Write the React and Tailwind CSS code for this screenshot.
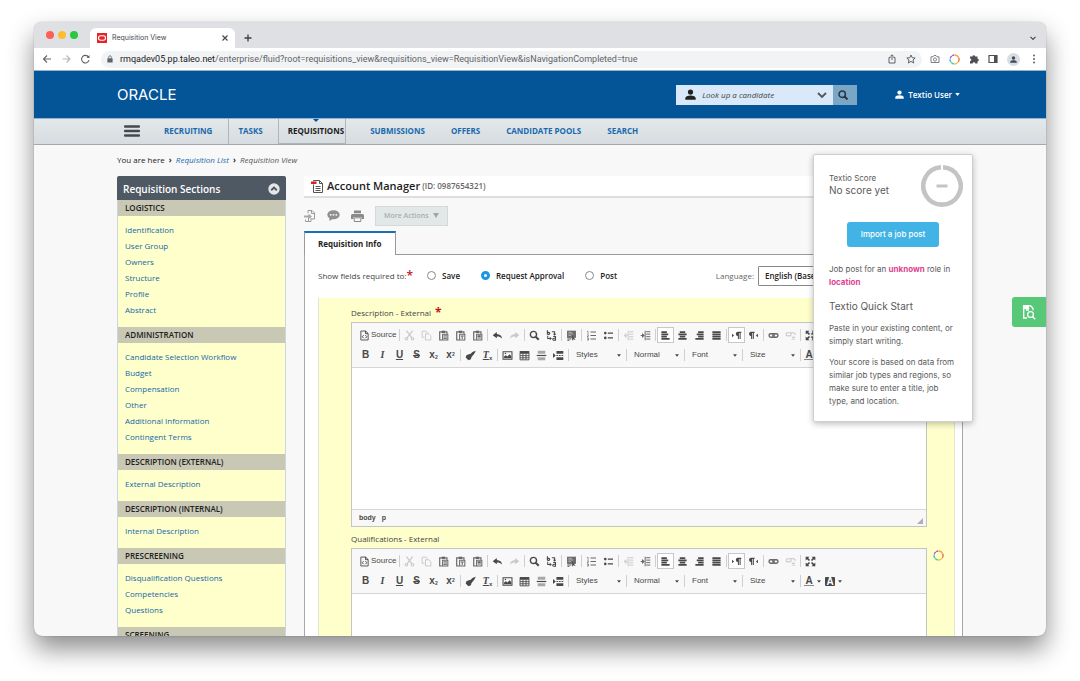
import React, { useState } from "react";

const sections = [
  {
    title: "LOGISTICS",
    links: ["Identification", "User Group", "Owners", "Structure", "Profile", "Abstract"],
  },
  {
    title: "ADMINISTRATION",
    links: [
      "Candidate Selection Workflow",
      "Budget",
      "Compensation",
      "Other",
      "Additional Information",
      "Contingent Terms",
    ],
  },
  { title: "DESCRIPTION (EXTERNAL)", links: ["External Description"] },
  { title: "DESCRIPTION (INTERNAL)", links: ["Internal Description"] },
  {
    title: "PRESCREENING",
    links: ["Disqualification Questions", "Competencies", "Questions"],
  },
  { title: "SCREENING", links: [] },
];

const clipboard = (
  <>
    <path d="M6 2.8H2.500v11.700h3.500M10.500 2.800H13v2.500" fill="none" stroke="currentColor" strokeWidth="1.700" />
    <path d="M5.500 1h5v3.400h-5z" />
    <path d="M6.700 6.200h7.600v8.300H6.700z" fill="none" stroke="currentColor" strokeWidth="1.500" />
  </>
);

const glyphs = {
  source: (
    <>
      <path d="M2.7 1.5h7l3.600 3.600v9.400H2.700z" fill="none" stroke="currentColor" strokeWidth="1.300" />
      <path d="M9.500 1.500v3.800h3.800M6.700 7.500L4.700 9.700l2 2.200M9.300 7.500l2 2.200-2 2.200" fill="none" stroke="currentColor" strokeWidth="1.400" />
    </>
  ),
  cut: (
    <>
      <path d="M3.500 1l8 10.500M12.500 1l-8 10.500" fill="none" stroke="currentColor" strokeWidth="1.800" />
      <circle cx="3.500" cy="12.800" r="1.800" fill="none" stroke="currentColor" strokeWidth="1.600" />
      <circle cx="12.500" cy="12.800" r="1.800" fill="none" stroke="currentColor" strokeWidth="1.600" />
    </>
  ),
  copy: (
    <>
      <path d="M5 10.500H1.700V1.700h5.600l1.900 1.900V5" fill="none" stroke="currentColor" strokeWidth="1.400" />
      <path d="M6.500 5.500h5l2.800 2.800v6.200H6.500z" fill="none" stroke="currentColor" strokeWidth="1.400" />
    </>
  ),
  paste: (
    <>
      {clipboard}
      <path d="M8 8.300h5M8 10.300h5M8 12.300h5" fill="none" stroke="currentColor" strokeWidth="1.300" />
    </>
  ),
  pasteText: (
    <>
      {clipboard}
      <path d="M8.300 8.700h4.500M10.500 8.500V13" fill="none" stroke="currentColor" strokeWidth="1.500" />
    </>
  ),
  pasteWord: (
    <>
      {clipboard}
      <path d="M8.500 8h4v2.500h-4zM8 12.500h5" stroke="currentColor" strokeWidth="0.800" />
    </>
  ),
  undo: <path d="M7 3L1 7.500 7 12V9.300c3.500 0 6 .7 7.700 3.200C14.300 8.500 11.500 6 7 5.800z" />,
  redo: <path d="M9 3l6 4.500L9 12V9.300c-3.500 0-6 .7-7.700 3.200C1.700 8.500 4.500 6 9 5.800z" />,
  find: (
    <>
      <circle cx="6.500" cy="6.500" r="4.500" fill="none" stroke="currentColor" strokeWidth="2.100" />
      <path d="M9.700 9.700l4.500 4.500" stroke="currentColor" strokeWidth="3" />
    </>
  ),
  replace: (
    <>
      <path d="M2 .5v5.800M2 3.500h2a1.400 1.400 0 010 2.800H2" fill="none" stroke="currentColor" strokeWidth="1.600" />
      <path d="M10.500 9.500h3.300v5.300h-2.600a1.300 1.300 0 010-2.700h2.600" fill="none" stroke="currentColor" strokeWidth="1.600" />
      <path d="M2.500 8.500v3.800h3.500M8.500 2.500h4v4" fill="none" stroke="currentColor" strokeWidth="1.500" />
      <path d="M5.500 9.800L8.500 12.300l-3 2.500zM10 5.500h5L12.500 8.300z" />
    </>
  ),
  selectAll: (
    <>
      <path d="M1.500 1h13v10.500h-13z" opacity="0.8" />
      <path d="M2 13h6M2 15h3" stroke="currentColor" strokeWidth="1.300" />
      <path d="M9 7.500v8l2-2 3 1.500z" />
      <path d="M3.500 3.500h5M3.500 5.700h7M3.500 7.900h4" stroke="#f8f8f8" strokeWidth="0.700" />
    </>
  ),
  ol: (
    <>
      <path d="M6.500 3h8M6.500 8h8M6.500 13h8" stroke="currentColor" strokeWidth="1.500" />
      <path d="M1.500 2H3v3.500M1.500 7h2v1.200l-2 1.500h2.200M1.500 11.500h2v3.200h-2M2 13h1.500" fill="none" stroke="currentColor" />
    </>
  ),
  ul: (
    <>
      <path d="M7 4.500h7.500M7 11.500h7.500" stroke="currentColor" strokeWidth="2" />
      <circle cx="3.300" cy="4.500" r="1.900" />
      <circle cx="3.300" cy="11.500" r="1.900" />
    </>
  ),
  outdent: (
    <>
      <path d="M9 2.500h6M9 6h6M9 9.700h6M9 13.200h6M7.500 1v14" stroke="currentColor" strokeWidth="1.400" />
      <path d="M5 4.500L1 8l4 3.500zM4 7.300h3v1.500H4z" />
    </>
  ),
  indent: (
    <>
      <path d="M9 2.500h6M9 6h6M9 9.700h6M9 13.200h6M7.500 1v14" stroke="currentColor" strokeWidth="1.400" />
      <path d="M3 4.500L7 8l-4 3.500zM1 7.300h3v1.500H1z" />
    </>
  ),
  left: <path d="M2 3h8M2 6.300h10M2 9.600h8M2 12.900h12" stroke="currentColor" strokeWidth="2.400" />,
  center: <path d="M4 3h8M2 6.300h12M4 9.600h8M2 12.900h12" stroke="currentColor" strokeWidth="2.400" />,
  right: <path d="M6 3h8M4 6.300h10M6 9.600h8M2 12.900h12" stroke="currentColor" strokeWidth="2.400" />,
  justify: <path d="M2 3h12M2 6.300h12M2 9.600h12M2 12.900h12" stroke="currentColor" strokeWidth="2.400" />,
  ltr: <path d="M1.500 5.500l3 2.500-3 2.500zM9.500 2.500H15v1.700h-1v9h-1.500v-9h-1v9H10V9a3.300 3.300 0 01-.5-6.500z" />,
  rtl: <path d="M14.500 5.500l-3 2.500 3 2.500zM4 2.500h5.500v1.700h-1v9H7v-9H6v9H4.500V9A3.300 3.300 0 014 2.500z" />,
  link: (
    <>
      <rect x="1.500" y="5.500" width="7.500" height="5" rx="2.500" fill="none" stroke="currentColor" strokeWidth="2" />
      <rect x="7" y="5.500" width="7.500" height="5" rx="2.500" fill="none" stroke="currentColor" strokeWidth="2" />
    </>
  ),
  unlink: (
    <>
      <rect x="1.500" y="4" width="7.500" height="4.500" rx="2.200" fill="none" stroke="currentColor" strokeWidth="1.600" />
      <path d="M8 4h4.500a2.200 2.200 0 012 3M10 9.500l4.500 4.500M14.500 9.500L10 14" fill="none" stroke="currentColor" strokeWidth="1.600" />
    </>
  ),
  maximize: (
    <>
      <path d="M2 2l4.500 4.500M14 2L9.500 6.500M2 14l4.500-4.500M14 14L9.500 9.500" stroke="currentColor" strokeWidth="2.400" />
      <path d="M1 1h5.500L1 6.500zM15 1v5.500L9.500 1zM1 15V9.500L6.500 15zM15 15H9.500L15 9.500z" />
    </>
  ),
  brush: (
    <path d="M15.500 1c-2.500.5-5.300 2-7 4.300L5.500 6 2 7.800 1 11l4 4 3.500-1.500 1-3.300 1.800-2.200C13 6 15 3.500 15.500 1z" />
  ),
  image: (
    <>
      <path d="M1.500 2.500h13v11h-13z" fill="none" stroke="currentColor" strokeWidth="1.500" />
      <path d="M3 12V9.500l2.500-2 2.500 2L11 6l2.500 3v3z" />
      <circle cx="5" cy="5.200" r="1.100" />
    </>
  ),
  table: (
    <>
      <path d="M1 1.500h14v4H1z" />
      <path d="M1.500 5v9.300h13V5M1.500 8.200h13M1.500 11.300h13M5.700 5v9M10.200 5v9" fill="none" stroke="currentColor" strokeWidth="1.300" />
    </>
  ),
  hr: (
    <>
      <path d="M2.500 1h11v4.500h-11zM2.500 10.500h11V15h-11z" opacity="0.450" />
      <path d="M1 8h14" stroke="currentColor" strokeWidth="1.700" />
    </>
  ),
  pageBreak: (
    <>
      <path d="M0 4.500L4 8l-4 3.500zM5 1.500h10v3.800H5zM5 10.700h10v3.800H5z" />
      <path d="M5 8h10" stroke="currentColor" strokeWidth="1.400" strokeDasharray="2.500 1.200" />
    </>
  ),
};

const topRow = [
  ["cut", "Cut", "off"],
  ["copy", "Copy", "off"],
  ["paste", "Paste", "soft"],
  ["pasteText", "Paste as plain text", "soft"],
  ["pasteWord", "Paste from Word", "soft"],
  null,
  ["undo", "Undo"],
  ["redo", "Redo", "off"],
  null,
  ["find", "Find"],
  ["replace", "Replace"],
  null,
  ["selectAll", "Select All"],
  null,
  ["ol", "Numbered list", "soft"],
  ["ul", "Bulleted list"],
  null,
  ["outdent", "Decrease indent", "off"],
  ["indent", "Increase indent", "soft"],
  null,
  ["left", "Align left", "on"],
  ["center", "Center"],
  ["right", "Align right"],
  ["justify", "Justify"],
  null,
  ["ltr", "Text direction left to right", "on"],
  ["rtl", "Text direction right to left"],
  null,
  ["link", "Link", "soft"],
  ["unlink", "Unlink", "off"],
  null,
  ["maximize", "Maximize"],
];

const tones = {
  off: "border-transparent text-[#c9c9c9]",
  soft: "border-transparent text-[#666]",
  on: "border-[#c8c8c8] bg-white text-[#484848]",
  normal: "border-transparent text-[#484848]",
};

const Glyph = ({ name }) => (
  <svg viewBox="0 0 16 16" className="size-[11px] shrink-0" fill="currentColor" aria-hidden="true">
    {glyphs[name]}
  </svg>
);

const ToolButton = ({ label, tone = "normal", children }) => (
  <button
    type="button"
    aria-label={label}
    disabled={tone === "off"}
    className={`flex h-4 w-[17px] shrink-0 items-center justify-center border ${tones[tone]}`}
  >
    {children}
  </button>
);

const Divider = () => (
  <span className="flex w-[3px] shrink-0 justify-center">
    <span className="h-3 w-px bg-[#cfcfcf]" />
  </span>
);

const Caret = () => (
  <svg viewBox="0 0 6 4" className="h-[3px] w-1 shrink-0" fill="#484848" aria-hidden="true">
    <path d="M0 0h6L3 4z" />
  </svg>
);

const Combo = ({ label }) => (
  <span className="flex w-[55px] shrink-0 items-center pr-1 pl-1.5">
    <select
      aria-label={label}
      className="min-w-0 flex-1 appearance-none bg-transparent text-[8px] leading-3 text-[#484848]"
    >
      <option>{label}</option>
    </select>
    <Caret />
  </span>
);

const Editor = ({ id, label, required }) => (
  <div className="flex flex-col">
    <label htmlFor={id} className="flex h-3 items-center text-[8px] leading-3 text-[#444]">
      {label}
      {required && <span className="ml-1 text-xs leading-3 font-bold text-[#c4161c]">*</span>}
    </label>
    <div className="mt-[3px] border border-[#c4c4c4] bg-white">
      <div className="overflow-hidden border-b border-[#d6d6d6] bg-[#f8f8f8] py-0.5 pl-[5px] font-['Liberation_Sans',Arial,sans-serif]">
        <div className="flex h-5 items-center">
          <button
            type="button"
            className="flex w-[41px] shrink-0 items-center gap-px pl-0.5 text-[8px] leading-3 text-[#484848]"
          >
            <Glyph name="source" />
            Source
          </button>
          <Divider />
          {topRow.map((item, i) =>
            item ? (
              <ToolButton key={i} label={item[1]} tone={item[2]}>
                <Glyph name={item[0]} />
              </ToolButton>
            ) : (
              <Divider key={i} />
            )
          )}
        </div>
        <div className="flex h-5 items-center text-[10px] leading-3 font-bold">
          <ToolButton label="Bold">B</ToolButton>
          <ToolButton label="Italic">
            <i className="font-['Liberation_Serif',serif]">I</i>
          </ToolButton>
          <ToolButton label="Underline">
            <u>U</u>
          </ToolButton>
          <ToolButton label="Strikethrough">
            <s>S</s>
          </ToolButton>
          <ToolButton label="Subscript">
            <span>
              x<sub className="text-[5px]">2</sub>
            </span>
          </ToolButton>
          <ToolButton label="Superscript">
            <span>
              x<sup className="text-[5px]">2</sup>
            </span>
          </ToolButton>
          <Divider />
          <ToolButton label="Copy formatting">
            <Glyph name="brush" />
          </ToolButton>
          <ToolButton label="Remove format">
            <span>
              <i className="font-['Liberation_Serif',serif] underline">T</i>
              <sub className="text-[6px]">x</sub>
            </span>
          </ToolButton>
          <Divider />
          {["image", "table", "hr", "pageBreak"].map((name) => (
            <ToolButton key={name} label={name}>
              <Glyph name={name} />
            </ToolButton>
          ))}
          <div className="flex items-center font-normal">
            {["Styles", "Normal", "Font", "Size"].map((name) => (
              <React.Fragment key={name}>
                <Divider />
                <Combo label={name} />
              </React.Fragment>
            ))}
          </div>
          <Divider />
          <button
            type="button"
            aria-label="Text color"
            className="flex w-[21px] shrink-0 items-center justify-center gap-[3px] text-[#484848]"
          >
            <span className="border-b border-[#8a8a8a] px-px leading-[9px]">A</span>
            <Caret />
          </button>
          <button
            type="button"
            aria-label="Background color"
            className="flex w-[21px] shrink-0 items-center justify-center gap-[3px]"
          >
            <span className="rounded-[1px] bg-[#484848] px-px leading-[9px] text-white">A</span>
            <Caret />
          </button>
        </div>
      </div>
      <textarea id={id} className="block h-[141px] w-full resize-none bg-white p-2 text-[10px]" />
      <div className="flex h-[17px] items-center gap-1.5 border-t border-[#d6d6d6] bg-[#f8f8f8] pr-[3px] pl-[7px] font-['Liberation_Sans',Arial,sans-serif] text-[7px] font-bold text-[#484848]">
        <span>body</span>
        <span>p</span>
        <svg viewBox="0 0 6 6" className="mt-1.5 ml-auto size-1.5" fill="#b0b0b0" aria-hidden="true">
          <path d="M6 0v6H0z" />
        </svg>
      </div>
    </div>
  </div>
);

const PersonIcon = ({ className }) => (
  <svg viewBox="0 0 16 16" className={className} fill="currentColor" aria-hidden="true">
    <circle cx="8" cy="4.500" r="3.800" />
    <path d="M.5 15.500v-2C.5 10.800 4 9.500 8 9.500s7.500 1.300 7.500 4v2z" />
  </svg>
);

const TextioRing = ({ className }) => (
  <svg viewBox="0 0 16 16" className={className} fill="none" strokeWidth="2" aria-hidden="true">
    <path d="M8.500 1.500a6.500 6.500 0 015.200 3.300" stroke="#f6a03a" />
    <path d="M14 5.300a6.500 6.500 0 01-.4 6" stroke="#f0704a" />
    <path d="M13.200 11.900a6.500 6.500 0 01-4.500 2.600" stroke="#f4c542" />
    <path d="M8 14.500a6.500 6.500 0 01-4.800-2.200" stroke="#5cc878" />
    <path d="M2.800 11.800A6.500 6.500 0 011.600 7" stroke="#44b4e8" />
    <path d="M1.800 6.300A6.500 6.500 0 014 3" stroke="#8e62c8" />
    <path d="M4.500 2.600a6.500 6.500 0 013.300-1.100" stroke="#e84a98" />
  </svg>
);

const BrowserBar = () => (
  <div className="shrink-0 font-[Inter,sans-serif]">
    <div className="flex h-[26px] items-end bg-[#dee0e4] pl-3">
      <div className="mr-3 flex h-[26px] items-center gap-1">
        <span className="size-2 rounded-full bg-[#fe5f57]" />
        <span className="size-2 rounded-full bg-[#febc2e]" />
        <span className="size-2 rounded-full bg-[#28c840]" />
      </div>
      <div className="flex h-5 w-[145px] items-center rounded-t-md bg-white pr-1.5 pl-[7px]">
        <svg viewBox="0 0 10 10" className="size-2.5" aria-hidden="true">
          <rect width="10" height="10" fill="#e8242b" />
          <rect x="1.500" y="2.800" width="7" height="4.400" rx="2.200" fill="none" stroke="#fff" strokeWidth="1.100" />
        </svg>
        <span className="ml-[5px] flex-1 text-[7px] leading-3 text-[#45494d]">Requisition View</span>
        <button type="button" aria-label="Close tab">
          <svg viewBox="0 0 8 8" className="size-2" stroke="#45494d" strokeWidth="1.200" aria-hidden="true">
            <path d="M1.500 1.500l5 5M6.500 1.500l-5 5" />
          </svg>
        </button>
      </div>
      <button type="button" aria-label="New tab" className="mb-1.5 ml-[9px]">
        <svg viewBox="0 0 8 8" className="size-2" stroke="#3c4043" strokeWidth="1.300" aria-hidden="true">
          <path d="M4 .5v7M.5 4h7" />
        </svg>
      </button>
      <svg viewBox="0 0 8 8" className="mr-[9px] mb-1.5 ml-auto size-2" fill="none" stroke="#45494d" strokeWidth="1.200" aria-hidden="true">
        <path d="M1.500 2.800L4 5.300l2.500-2.500" />
      </svg>
    </div>
    <div className="flex h-[23px] items-center border-b border-[#8fb3d0] bg-white pr-[7px] pl-2">
      <svg viewBox="0 0 50 10" className="mr-[9px] h-2.5 w-[50px]" fill="none" strokeWidth="1.100" aria-hidden="true">
        <path d="M9 5H1.500M5 1.500L1.500 5 5 8.500" stroke="#5f6368" />
        <path d="M20.500 5H28M24.500 1.500L28 5l-3.500 3.500" stroke="#b4b7ba" />
        <path d="M46.500 3A3.800 3.800 0 1047 6.200" stroke="#5f6368" />
        <path d="M47.500 1v3h-3z" fill="#5f6368" />
      </svg>
      <div className="flex h-[17px] min-w-0 flex-1 items-center rounded-full bg-[#f1f3f4] px-1.5">
        <svg viewBox="0 0 8 10" className="h-2 w-1.5" aria-hidden="true">
          <path d="M.5 4h7v5.500h-7z" fill="#5f6368" />
          <path d="M2.200 4V2.500a1.800 1.800 0 013.600 0V4" fill="none" stroke="#5f6368" />
        </svg>
        <span className="ml-[7px] flex-1 truncate font-[Roboto,sans-serif] text-[9px] leading-3 text-[#5f6368]">
          <span className="text-[#202124]">rmqadev05.pp.taleo.net</span>
          /enterprise/fluid?root=requisitions_view&amp;requisitions_view=RequisitionView&amp;isNavigationCompleted=true
        </span>
        <svg viewBox="0 0 10 10" className="size-2.5" fill="none" stroke="#5f6368" aria-hidden="true">
          <path d="M3.500 3.500H2v5.500h6V3.500H6.500M5 6V1M3.300 2.500L5 .8l1.700 1.700" />
        </svg>
        <svg viewBox="0 0 10 10" className="ml-[9px] size-2.5" fill="none" stroke="#5f6368" aria-hidden="true">
          <path d="M5 1l1.200 2.700 3 .3L7 6l.7 3L5 7.400 2.300 9 3 6 .8 4l3-.3z" />
        </svg>
      </div>
      <div className="ml-2 flex items-center gap-[9px]">
        <svg viewBox="0 0 10 10" className="size-2.5" fill="none" stroke="#7b7f83" aria-hidden="true">
          <path d="M1 2.800h2L4 1.500h2l1 1.300h2v5.700H1z" />
          <circle cx="5" cy="5.500" r="1.600" />
        </svg>
        <TextioRing className="size-[11px]" />
        <svg viewBox="0 0 10 10" className="size-2.5" fill="#4d5155" aria-hidden="true">
          <path d="M3.500 2.500a1.300 1.300 0 012.600 0h2.400v2.300a1.300 1.300 0 010 2.600v2.100H6.300a1.300 1.300 0 00-2.600 0H1V7a1.300 1.300 0 000-2.600V2.500z" />
        </svg>
        <svg viewBox="0 0 10 10" className="size-2.5" aria-hidden="true">
          <path d="M1 1.500h8v7H1z" fill="none" stroke="#4d5155" strokeWidth="1.200" />
          <path d="M6 1.500h3v7H6z" fill="#4d5155" />
        </svg>
        <span className="flex size-[13px] items-center justify-center rounded-full bg-[#d9dde2]">
          <PersonIcon className="size-[7px] text-[#3f4a56]" />
        </span>
        <svg viewBox="0 0 10 10" className="size-2.5" fill="#5f6368" aria-hidden="true">
          <circle cx="5" cy="1.500" r="1" />
          <circle cx="5" cy="5" r="1" />
          <circle cx="5" cy="8.500" r="1" />
        </svg>
      </div>
    </div>
  </div>
);

const Header = () => (
  <header className="flex h-[47px] shrink-0 items-center bg-[#045598] pr-[86px] pl-[83px] text-white">
    <span className="font-[Inter,sans-serif] text-[15px] leading-4">ORACLE</span>
    <form className="ml-auto flex h-5 w-[181px] text-[#222]" onSubmit={(e) => e.preventDefault()}>
      <label htmlFor="lookup" aria-label="Look up a candidate" className="flex items-center bg-[#d9e9fa] pl-[9px]">
        <PersonIcon className="size-[11px]" />
      </label>
      <input
        id="lookup"
        type="text"
        placeholder="Look up a candidate"
        className="min-w-0 flex-1 bg-[#d9e9fa] pl-1.5 text-[8px] leading-3 italic placeholder:text-[#444]"
      />
      <button type="button" aria-label="Search options" className="bg-[#d9e9fa] pr-1.5">
        <svg viewBox="0 0 10 10" className="size-2.5" fill="none" stroke="#555" strokeWidth="1.800" aria-hidden="true">
          <path d="M1 3l4 4 4-4" />
        </svg>
      </button>
      <button type="submit" aria-label="Search" className="flex w-6 items-center justify-center bg-[#7ba7c7] pr-1">
        <svg viewBox="0 0 10 10" className="size-2.5" fill="none" stroke="#2b3640" strokeWidth="1.500" aria-hidden="true">
          <circle cx="4.200" cy="4.200" r="3.200" />
          <path d="M6.500 6.500l3 3" strokeWidth="2" />
        </svg>
      </button>
    </form>
    <button type="button" className="ml-[38px] flex items-center text-[8px] leading-3 font-semibold">
      <PersonIcon className="mr-1 size-[9px]" />
      Textio User
      <svg viewBox="0 0 6 4" className="ml-[3px] h-[3px] w-[5px]" fill="#fff" aria-hidden="true">
        <path d="M0 0h6L3 4z" />
      </svg>
    </button>
  </header>
);

const Nav = () => (
  <nav className="flex h-[27px] shrink-0 items-stretch border-t border-b border-t-[#8fb3d0] border-b-[#a3a8ab] bg-linear-to-b from-[#e3e8ea] to-[#d6dcdf] pl-[90px] text-[8px] leading-6 font-bold text-[#1a69ae]">
    <button type="button" aria-label="Menu" className="mr-6 pb-px">
      <svg viewBox="0 0 16 12" className="h-3 w-4" stroke="#44494e" strokeWidth="2.400" strokeLinecap="round" aria-hidden="true">
        <path d="M1 1.500h14M1 6h14M1 10.500h14" />
      </svg>
    </button>
    <a href="#recruiting" className="border-r border-[#b0b5b8] pr-4">
      RECRUITING
    </a>
    <a href="#tasks" className="border-r border-[#b0b5b8] pr-[15px] pl-[9px]">
      TASKS
    </a>
    <a
      href="#requisitions"
      aria-current="page"
      className="relative mr-6 border-r border-b border-[#b0b5b8] pr-px pl-[9px] text-[#1c1c1c]"
    >
      REQUISITIONS
      <svg viewBox="0 0 8 4" className="absolute top-0 left-1/2 h-[3px] w-2" fill="#045598" aria-hidden="true">
        <path d="M0 0h8L4 4z" />
      </svg>
    </a>
    <div className="flex gap-[26px]">
      <a href="#submissions">SUBMISSIONS</a>
      <a href="#offers">OFFERS</a>
      <a href="#pools">CANDIDATE POOLS</a>
      <a href="#search">SEARCH</a>
    </div>
  </nav>
);

const Sidebar = () => (
  <aside className="w-[169px] shrink-0">
    <div className="flex h-6 items-center justify-between rounded-t-xs bg-[#4f5963] px-1.5 pt-0.5">
      <h2 className="text-[10px] leading-4 font-semibold text-white">Requisition Sections</h2>
      <button type="button" aria-label="Collapse">
        <svg viewBox="0 0 12 12" className="size-3" aria-hidden="true">
          <circle cx="6" cy="6" r="5.700" fill="#e4e7e9" />
          <path d="M3.200 7.300L6 4.600l2.800 2.700" fill="none" stroke="#4f5963" strokeWidth="1.900" />
        </svg>
      </button>
    </div>
    <div className="border-x border-[#cdd6dc] bg-[#ffffcc]">
      {sections.map((section) => (
        <section key={section.title}>
          <h3 className="bg-[#c8c8b4] px-[7px] text-[8px] leading-4 font-semibold text-[#222]">{section.title}</h3>
          <ul className="px-[7px] pt-1.5 pb-[9px]">
            {section.links.map((link) => (
              <li key={link} className="text-[8px] leading-4">
                <a href="#section" className="text-[#1468a8]">
                  {link}
                </a>
              </li>
            ))}
          </ul>
        </section>
      ))}
    </div>
  </aside>
);

const RequisitionForm = () => {
  const [requiredTo, setRequiredTo] = useState("Request Approval");

  return (
    <main className="min-w-0 flex-1">
      <div className="flex h-[22px] items-center border-b-2 border-[#dedede] bg-white pl-[7px]">
        <svg viewBox="0 0 12 13" className="h-[13px] w-3" fill="none" stroke="#555" aria-hidden="true">
          <path d="M2.500 4.500v8h9V3.500l-3-3h-6v1M8.500.5v3h3M4.500 6.500h5M4.500 8.500h5M4.500 10.500h5" />
          <path d="M0 1.500h5.500v2.600H0z" fill="#d8232a" stroke="none" />
        </svg>
        <h1 className="ml-1 text-[11px] leading-4 font-semibold text-[#1e1e1e]">Account Manager</h1>
        <span className="ml-0.5 text-[8px] leading-3 font-semibold text-[#666]">(ID: 0987654321)</span>
      </div>
      <div className="flex h-[33px] items-center gap-[11px] pt-0.5">
        <button type="button" aria-label="Duplicate">
          <svg viewBox="0 0 12 12" className="size-3" fill="none" stroke="#9a9a9a" aria-hidden="true">
            <path d="M4 3V.5h4l2.500 2.500v6H7.500M7.500.5v3h3M4.500 7v4.500h-3V9.500M4.500 11.500H7V8" />
            <path d="M0 5.500h4.500V3.500L8 6.500 4.500 9V7.500H0z" fill="#a8a8a8" stroke="none" />
          </svg>
        </button>
        <button type="button" aria-label="Comments">
          <svg viewBox="0 0 13 11" className="h-[11px] w-[13px]" fill="#8f8f8f" aria-hidden="true">
            <ellipse cx="6.500" cy="4.800" rx="6.200" ry="4.500" />
            <path d="M2.500 7v4l4-2.500z" />
            <g fill="#fff">
              <circle cx="3.700" cy="4.800" r="0.900" />
              <circle cx="6.500" cy="4.800" r="0.900" />
              <circle cx="9.300" cy="4.800" r="0.900" />
            </g>
          </svg>
        </button>
        <button type="button" aria-label="Print">
          <svg viewBox="0 0 13 12" className="h-3 w-[13px]" fill="#8a8a8a" aria-hidden="true">
            <path d="M3 .5h7v2.700H3zM1.500 4h10A1.500 1.500 0 0113 5.500V9h-2.500V7h-8v2H0V5.500A1.500 1.500 0 011.500 4z" />
            <path d="M3.200 7.800h6.600v3.700H3.200z" fill="none" stroke="#8a8a8a" />
          </svg>
        </button>
        <button
          type="button"
          disabled
          className="flex h-5 items-center gap-1 border border-[#d4d8d8] bg-[#e2e8e8] px-2 text-[7px] leading-3 font-semibold text-[#a9aeae]"
        >
          More Actions
          <svg viewBox="0 0 6 5" className="h-[5px] w-1.5" fill="#a0a5a5" aria-hidden="true">
            <path d="M0 0h6L3 5z" />
          </svg>
        </button>
      </div>
      <div className="flex">
        <button
          type="button"
          className="h-6 border-x border-t-2 border-x-[#9a9a9a] border-t-[#1a6fb5] bg-white pr-3.5 pl-[13px] text-[8px] leading-3 font-bold text-[#1e1e1e]"
        >
          Requisition Info
        </button>
        <div className="flex-1 border-b border-[#9a9a9a]" />
      </div>
      <div className="border-x border-[#a8a8a8] bg-white pr-[7px] pl-[13px]">
        <div className="flex h-[43px] items-center pb-0.5 text-[8px] leading-3 font-semibold text-[#222]">
          <span className="font-normal text-[#444]">Show fields required to:</span>
          <span className="mr-3.5 text-xs leading-3 text-[#c4161c]">*</span>
          <div className="flex items-center gap-[21px]">
            {["Save", "Request Approval", "Post"].map((option) => (
              <label key={option} className="flex items-center gap-1.5">
                <input
                  type="radio"
                  name="required-to"
                  value={option}
                  checked={requiredTo === option}
                  onChange={() => setRequiredTo(option)}
                  className="size-[9px] appearance-none rounded-full border border-[#8a8a8a] bg-white checked:border-[3px] checked:border-[#1d95e5]"
                />
                {option}
              </label>
            ))}
          </div>
          <label htmlFor="language" className="mr-1 ml-auto font-normal text-[#666]">
            Language:
          </label>
          <select
            id="language"
            className="mr-[92px] h-5 w-[105px] appearance-none rounded-[1px] border border-[#888] bg-white px-1.5 text-[8px] font-semibold"
          >
            <option>English (Base)</option>
          </select>
        </div>
        <div className="relative flex flex-col gap-1.5 border-x border-[#e4e4d4] bg-[#ffffcc] pt-[9px] pr-[27px] pl-8">
          <Editor id="description" label="Description - External" required />
          <Editor id="qualifications" label="Qualifications - External" />
          <TextioRing className="absolute top-[252px] right-2.5 size-[11px]" />
        </div>
      </div>
    </main>
  );
};

const TextioPanel = () => (
  <div className="absolute top-[9px] right-[73px] w-[160px] rounded-[2px] border border-[#cfcfcf] bg-white px-[15px] pt-2.5 pb-[13px] font-[Inter,sans-serif] text-[8px] leading-[13px] text-[#5a5a5a] shadow-[0_2px_6px_rgba(0,0,0,0.25)]">
    <div className="-mr-1.5 flex items-start justify-between">
      <div className="pt-[7px]">
        <p className="leading-3">Textio Score</p>
        <p className="text-[10px] leading-3">No score yet</p>
      </div>
      <svg viewBox="0 0 42 42" className="size-[42px]" fill="none" stroke="#c4c4c4" aria-hidden="true">
        <path d="M22 2.300A18.700 18.700 0 1120 2.300" strokeWidth="4.600" />
        <path d="M15.500 21h11" strokeWidth="3" />
      </svg>
    </div>
    <button
      type="button"
      className="mx-auto mt-[15px] block h-[25px] w-[92px] rounded-[3px] bg-[#42b3e5] text-[8px] font-medium text-white"
    >
      Import a job post
    </button>
    <p className="mt-4">
      Job post for an <b className="text-[#e0428e]">unknown</b> role in <b className="text-[#e0428e]">location</b>
    </p>
    <h2 className="mt-[9px] text-[10px] leading-4">Textio Quick Start</h2>
    <p className="mt-2">Paste in your existing content, or simply start writing.</p>
    <p className="mt-2">
      Your score is based on data from similar job types and regions, so make sure to enter a title, job type, and
      location.
    </p>
  </div>
);

const App = () => (
  <div className="h-screen bg-white px-[34px] pt-[22px] pb-[45px] font-['Open_Sans',sans-serif]">
    <div className="flex h-full flex-col overflow-hidden rounded-lg bg-[#f8f8f8] shadow-[0_0_1px_rgba(0,0,0,0.5),0_13px_26px_rgba(0,0,0,0.45)]">
      <BrowserBar />
      <Header />
      <Nav />
      <div className="relative min-h-0 flex-1 overflow-hidden px-[83px] pt-[9px]">
        <p className="text-[8px] leading-3 text-[#222]">
          You are here <span className="mx-0.5 font-bold">›</span>{" "}
          <a href="#list" className="text-[#1a69ae] italic">
            Requisition List
          </a>{" "}
          <span className="mx-0.5 font-bold">›</span> <i className="text-[#555]">Requisition View</i>
        </p>
        <div className="mt-2.5 flex gap-[18px]">
          <Sidebar />
          <RequisitionForm />
        </div>
        <TextioPanel />
        <button
          type="button"
          aria-label="Open Textio"
          className="absolute top-[152px] right-0 flex h-[30px] w-[34px] items-center justify-center rounded-l-[3px] bg-[#56c878]"
        >
          <svg viewBox="0 0 14 16" className="h-4 w-3.5" fill="none" stroke="#fff" strokeWidth="1.300" aria-hidden="true">
            <path d="M5 14H1.700V1.700h6.800L11 4.200v2M4 6h3" />
            <path d="M1.500 2.500h5v2h-5z" fill="#fff" />
            <circle cx="8.500" cy="10.500" r="2.900" />
            <path d="M10.700 12.700l2.500 2.500" />
          </svg>
        </button>
      </div>
    </div>
  </div>
);

export default App;
